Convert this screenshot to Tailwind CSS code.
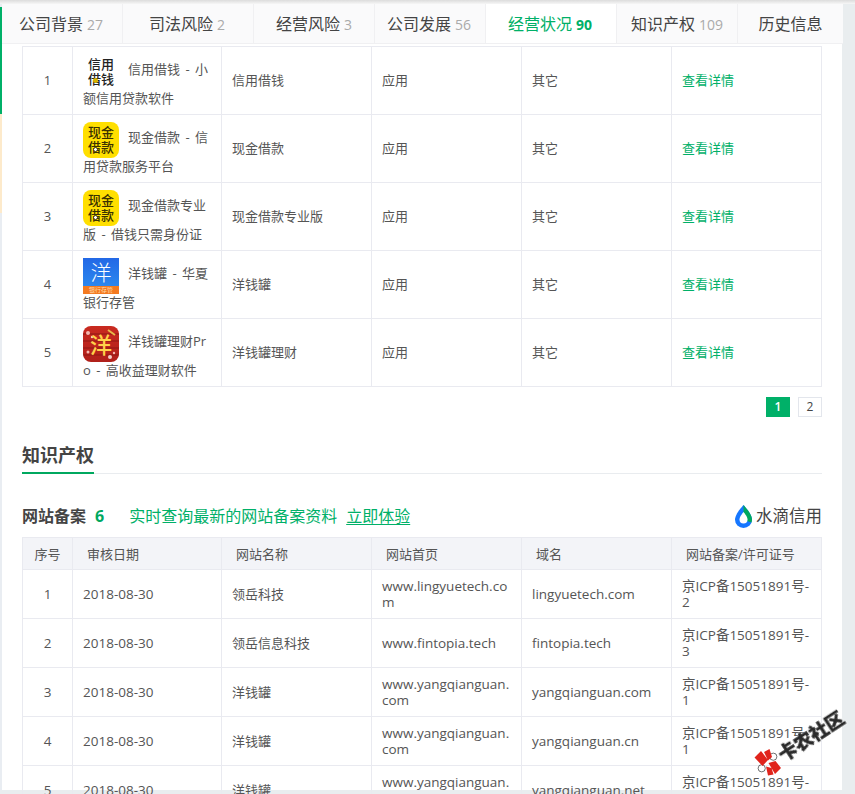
<!DOCTYPE html>
<html lang="zh-CN">
<head>
  <meta charset="UTF-8" />
  <title>经营状况</title>
  <script src="https://cdn.jsdelivr.net/npm/@tailwindcss/browser@4"></script>
</head>
<body class="bg-[#e9edef] font-['Open_Sans','Noto_Sans_CJK_SC',sans-serif] text-[13px] text-[#555]">
<div class="relative h-[794px] w-[855px] overflow-hidden">

  <!-- top shadow -->
  <div class="h-[4px] bg-gradient-to-b from-[#dcdcdc] to-[#f6f6f6]"></div>

  <div class="flex h-[786px]">
    <!-- left edge of the sidebar -->
    <div class="flex w-[2px] flex-col bg-[#e9edf2]">
      <div class="mt-[3px] h-[107px] bg-[#00b068]"></div>
      <div class="h-[99px] bg-[#fdeacb]"></div>
    </div>

    <div class="w-[840px] bg-white">
      <!-- Tabs -->
      <div class="flex h-[40px] w-[841px] border-b border-[#f0f0f2] bg-[#fafafb] text-[16px] leading-[40px] text-[#444]">
        <div class="w-[121px] border-r border-[#f0f0f2] pr-[2px] text-center whitespace-nowrap">公司背景 <span class="text-[14px] text-[#aaa]">27</span></div>
        <div class="w-[131px] border-r border-[#f0f0f2] pr-[2px] text-center whitespace-nowrap">司法风险 <span class="text-[14px] text-[#aaa]">2</span></div>
        <div class="w-[121px] border-r border-[#f0f0f2] text-center whitespace-nowrap">经营风险 <span class="text-[14px] text-[#aaa]">3</span></div>
        <div class="w-[111px] border-r border-[#f0f0f2] pr-[2px] text-center whitespace-nowrap">公司发展 <span class="text-[14px] text-[#aaa]">56</span></div>
        <div class="w-[131px] border-r border-[#f0f0f2] bg-white pr-[2px] text-center whitespace-nowrap text-[#00b068]">经营状况 <span class="text-[14px] font-bold">90</span></div>
        <div class="w-[121px] border-r border-[#f0f0f2] text-center whitespace-nowrap">知识产权 <span class="text-[14px] text-[#aaa]">109</span></div>
        <div class="w-[105px] text-center whitespace-nowrap">历史信息</div>
      </div>

      <div class="pt-[2px] pl-[20px]">
        <!-- App table -->
        <table class="w-[799px] table-fixed border-collapse">
          <colgroup>
            <col class="w-[50px]" /><col class="w-[149px]" /><col class="w-[150px]" /><col class="w-[150px]" /><col class="w-[150px]" /><col class="w-[150px]" />
          </colgroup>
          <tbody>
            <tr class="h-[68px]">
              <td class="border border-[#e9eaf0] pt-[1px] text-center">1</td>
              <td class="border border-[#e9eaf0] px-[10px] pb-[1px] leading-[18px] [word-spacing:2px]">
                <span class="relative top-[1px] mr-[9px] inline-flex h-9 w-9 flex-col items-center justify-center bg-white align-middle text-[13px] leading-[15px] font-medium text-[#222]"><span>信用</span><span>借钱</span><span class="absolute top-[24px] left-[10px] h-[5px] w-[5px] rounded-full bg-[#d9b400]"></span></span>信用借钱 - 小额信用贷款软件
              </td>
              <td class="border border-[#e9eaf0] px-[10px] pt-[1px]">信用借钱</td>
              <td class="border border-[#e9eaf0] px-[10px] pt-[1px]">应用</td>
              <td class="border border-[#e9eaf0] px-[10px] pt-[1px]">其它</td>
              <td class="border border-[#e9eaf0] px-[10px] pt-[1px] text-[#00b068]">查看详情</td>
            </tr>
            <tr class="h-[68px]">
              <td class="border border-[#e9eaf0] pt-[1px] text-center">2</td>
              <td class="border border-[#e9eaf0] px-[10px] pb-[1px] leading-[18px] [word-spacing:2px]">
                <span class="relative top-[1px] mr-[9px] inline-flex h-9 w-9 flex-col items-center justify-center rounded-[8px] bg-[#ffdf00] align-middle text-[13px] leading-[15px] font-medium text-[#3a3000]"><span>现金</span><span>借款</span><span class="absolute top-[25px] left-[10px] h-[5px] w-[5px] rounded-full border border-[#3a3000] bg-white"></span></span>现金借款 - 信用贷款服务平台
              </td>
              <td class="border border-[#e9eaf0] px-[10px] pt-[1px]">现金借款</td>
              <td class="border border-[#e9eaf0] px-[10px] pt-[1px]">应用</td>
              <td class="border border-[#e9eaf0] px-[10px] pt-[1px]">其它</td>
              <td class="border border-[#e9eaf0] px-[10px] pt-[1px] text-[#00b068]">查看详情</td>
            </tr>
            <tr class="h-[68px]">
              <td class="border border-[#e9eaf0] pt-[1px] text-center">3</td>
              <td class="border border-[#e9eaf0] px-[10px] pb-[1px] leading-[18px] [word-spacing:2px]">
                <span class="relative top-[1px] mr-[9px] inline-flex h-9 w-9 flex-col items-center justify-center rounded-[8px] bg-[#ffdf00] align-middle text-[13px] leading-[15px] font-medium text-[#3a3000]"><span>现金</span><span>借款</span><span class="absolute top-[25px] left-[10px] h-[5px] w-[5px] rounded-full border border-[#3a3000] bg-white"></span></span>现金借款专业版 - 借钱只需身份证
              </td>
              <td class="border border-[#e9eaf0] px-[10px] pt-[1px]">现金借款专业版</td>
              <td class="border border-[#e9eaf0] px-[10px] pt-[1px]">应用</td>
              <td class="border border-[#e9eaf0] px-[10px] pt-[1px]">其它</td>
              <td class="border border-[#e9eaf0] px-[10px] pt-[1px] text-[#00b068]">查看详情</td>
            </tr>
            <tr class="h-[68px]">
              <td class="border border-[#e9eaf0] pt-[1px] text-center">4</td>
              <td class="border border-[#e9eaf0] px-[10px] pb-[1px] leading-[18px] [word-spacing:2px]">
                <span class="relative top-[1px] mr-[9px] inline-flex h-9 w-9 flex-col items-center overflow-hidden bg-gradient-to-b from-[#2368e6] to-[#2f8ff0] align-middle"><span class="h-[28px] text-[21px] leading-[28px] font-light text-white">洋</span><span class="h-[8px] w-full bg-[#f47a20] text-center text-[6px] leading-[8px] text-[#ffd9a8]">银行存管</span></span>洋钱罐 - 华夏银行存管
              </td>
              <td class="border border-[#e9eaf0] px-[10px] pt-[1px]">洋钱罐</td>
              <td class="border border-[#e9eaf0] px-[10px] pt-[1px]">应用</td>
              <td class="border border-[#e9eaf0] px-[10px] pt-[1px]">其它</td>
              <td class="border border-[#e9eaf0] px-[10px] pt-[1px] text-[#00b068]">查看详情</td>
            </tr>
            <tr class="h-[68px]">
              <td class="border border-[#e9eaf0] pt-[1px] text-center">5</td>
              <td class="border border-[#e9eaf0] px-[10px] pb-[1px] leading-[18px] break-all [word-spacing:2px]">
                <span class="relative top-[1px] mr-[9px] inline-flex h-9 w-9 items-center justify-center overflow-hidden rounded-[8px] bg-gradient-to-b from-[#c92a20] to-[#b0201a] align-middle">
                  <svg class="absolute inset-0 h-9 w-9" viewBox="0 0 36 36">
                    <path stroke="#8f1712" stroke-width="1" d="M0 8h36M0 15h36M0 22h36M0 29h36" />
                    <path stroke="#e8b84a" stroke-width="2" d="M25 4l7 5" />
                    <circle cx="5" cy="7" r="2" fill="#f4b8b0" /><circle cx="9" cy="11" r="1.2" fill="#f4d0c8" />
                    <circle cx="5" cy="26" r="1.5" fill="#f4b8b0" /><circle cx="27" cy="31" r="2" fill="#f4d0c8" /><circle cx="31" cy="27" r="1.2" fill="#f4b8b0" />
                  </svg>
                  <span class="relative text-[22px] leading-9 font-medium text-[#ffd24a]">洋</span>
                </span>洋钱罐理财Pro - 高收益理财软件
              </td>
              <td class="border border-[#e9eaf0] px-[10px] pt-[1px]">洋钱罐理财</td>
              <td class="border border-[#e9eaf0] px-[10px] pt-[1px]">应用</td>
              <td class="border border-[#e9eaf0] px-[10px] pt-[1px]">其它</td>
              <td class="border border-[#e9eaf0] px-[10px] pt-[1px] text-[#00b068]">查看详情</td>
            </tr>
          </tbody>
        </table>

        <!-- Pagination -->
        <div class="mt-[10px] flex w-[800px] justify-end gap-2">
          <div class="h-[20px] w-[24px] bg-[#00b068] text-center text-[12px] leading-[20px] font-semibold text-white">1</div>
          <div class="h-[20px] w-[24px] border border-[#e3e6ec] text-center text-[12px] leading-[18px] text-[#444]">2</div>
        </div>

        <!-- Section title -->
        <div class="mt-[25px] w-[800px] border-b border-[#e9ecef]">
          <div class="mb-[-1px] inline-block h-[32px] border-b-2 border-[#00a85f] text-[18px] leading-[26px] font-bold text-[#444]">知识产权</div>
        </div>

        <!-- Filing header -->
        <div class="mt-[28px] flex h-[28px] w-[800px] items-center">
          <span class="text-[16px] font-bold text-[#444]">网站备案</span>
          <span class="ml-[9px] text-[16px] font-bold text-[#00a85f]">6</span>
          <span class="ml-[25px] text-[16px] text-[#00b068]">实时查询最新的网站备案资料</span>
          <span class="ml-[9px] text-[16px] text-[#00b068] underline underline-offset-2">立即体验</span>
          <span class="ml-auto flex items-center gap-[4px] text-[16.5px] text-[#444]">
            <svg class="h-[23px] w-[17px]" viewBox="0 0 17 23">
              <path fill="#1677ff" d="M8.5 0C8.5 0 0 9 0 14.5a8.5 8.5 0 0 0 17 0C17 9 8.5 0 8.5 0z" />
              <path fill="#00a85f" d="M8.5 0C10 2 17 9 17 14.5c0 1-.2 2-.5 3L12 16c.2-.5.3-1 .3-1.5 0-2.5-3.8-7-3.8-7z" />
              <path fill="#fff" d="M8.5 7C8.5 7 4.5 11.5 4.5 14.5a4 4 0 0 0 8 0C12.5 11.5 8.5 7 8.5 7z" />
            </svg>
            水滴信用
          </span>
        </div>

        <!-- Filing table -->
        <table class="mt-[7px] w-[799px] table-fixed border-collapse leading-[16px]">
          <colgroup>
            <col class="w-[50px]" /><col class="w-[149px]" /><col class="w-[150px]" /><col class="w-[150px]" /><col class="w-[150px]" /><col class="w-[150px]" />
          </colgroup>
          <thead>
            <tr class="h-[32px] bg-[#f3f4f8] text-left font-normal">
              <th class="border border-[#e9eaf0] text-center font-normal">序号</th>
              <th class="border border-[#e9eaf0] pl-[14px] font-normal">审核日期</th>
              <th class="border border-[#e9eaf0] pl-[14px] font-normal">网站名称</th>
              <th class="border border-[#e9eaf0] pl-[14px] font-normal">网站首页</th>
              <th class="border border-[#e9eaf0] pl-[14px] font-normal">域名</th>
              <th class="border border-[#e9eaf0] pl-[14px] font-normal">网站备案/许可证号</th>
            </tr>
          </thead>
          <tbody class="text-[13.5px]">
            <tr class="h-[49px]">
              <td class="border border-[#e9eaf0] text-center">1</td>
              <td class="border border-[#e9eaf0] px-[10px]">2018-08-30</td>
              <td class="border border-[#e9eaf0] px-[10px] text-[13px]">领岳科技</td>
              <td class="border border-[#e9eaf0] px-[10px] break-all">www.lingyuetech.com</td>
              <td class="border border-[#e9eaf0] px-[10px]">lingyuetech.com</td>
              <td class="border border-[#e9eaf0] px-[10px]">京ICP备15051891号-<wbr />2</td>
            </tr>
            <tr class="h-[49px]">
              <td class="border border-[#e9eaf0] text-center">2</td>
              <td class="border border-[#e9eaf0] px-[10px]">2018-08-30</td>
              <td class="border border-[#e9eaf0] px-[10px] text-[13px]">领岳信息科技</td>
              <td class="border border-[#e9eaf0] px-[10px] break-all">www.fintopia.tech</td>
              <td class="border border-[#e9eaf0] px-[10px]">fintopia.tech</td>
              <td class="border border-[#e9eaf0] px-[10px]">京ICP备15051891号-<wbr />3</td>
            </tr>
            <tr class="h-[49px]">
              <td class="border border-[#e9eaf0] text-center">3</td>
              <td class="border border-[#e9eaf0] px-[10px]">2018-08-30</td>
              <td class="border border-[#e9eaf0] px-[10px] text-[13px]">洋钱罐</td>
              <td class="border border-[#e9eaf0] px-[10px] break-all">www.yangqianguan.com</td>
              <td class="border border-[#e9eaf0] px-[10px]">yangqianguan.com</td>
              <td class="border border-[#e9eaf0] px-[10px]">京ICP备15051891号-<wbr />1</td>
            </tr>
            <tr class="h-[49px]">
              <td class="border border-[#e9eaf0] text-center">4</td>
              <td class="border border-[#e9eaf0] px-[10px]">2018-08-30</td>
              <td class="border border-[#e9eaf0] px-[10px] text-[13px]">洋钱罐</td>
              <td class="border border-[#e9eaf0] px-[10px] break-all">www.yangqianguan.com</td>
              <td class="border border-[#e9eaf0] px-[10px]">yangqianguan.cn</td>
              <td class="border border-[#e9eaf0] px-[10px]">京ICP备15051891号-<wbr />1</td>
            </tr>
            <tr class="h-[49px]">
              <td class="border border-[#e9eaf0] text-center">5</td>
              <td class="border border-[#e9eaf0] px-[10px]">2018-08-30</td>
              <td class="border border-[#e9eaf0] px-[10px] text-[13px]">洋钱罐</td>
              <td class="border border-[#e9eaf0] px-[10px] break-all">www.yangqianguan.com</td>
              <td class="border border-[#e9eaf0] px-[10px]">yangqianguan.net</td>
              <td class="border border-[#e9eaf0] px-[10px]">京ICP备15051891号-<wbr />1</td>
            </tr>
          </tbody>
        </table>
      </div>
    </div>
  </div>

  <!-- Forum watermark -->
  <div class="absolute top-[722px] left-[771px] w-[80px] -rotate-[33deg] text-center text-[18.5px] leading-[28px] font-black whitespace-nowrap text-[#2a2a2a] [-webkit-text-stroke:0.4px_#2a2a2a] drop-shadow-[0_0_1px_#fff]">卡农社区</div>
  <svg class="absolute top-[748px] left-[754px] h-[28px] w-[28px]" viewBox="0 0 28 28">
    <circle cx="19.3" cy="8.7" r="3.6" fill="#fff" stroke="#333" stroke-width="0.7" />
    <circle cx="7.7" cy="20.3" r="3.6" fill="#fff" stroke="#333" stroke-width="0.7" />
    <path fill="#e0241c" d="M0.5 9.5L7 3l7 9-5.5 6zM10 4L15.5 1l2.5 8-4 3.5zM14.5 15l7-2 5.5 7-6 6zM12 18.5l5.5 1.5 2 6.5-5.5 1z" />
  </svg>
</div>
</body>
</html>
